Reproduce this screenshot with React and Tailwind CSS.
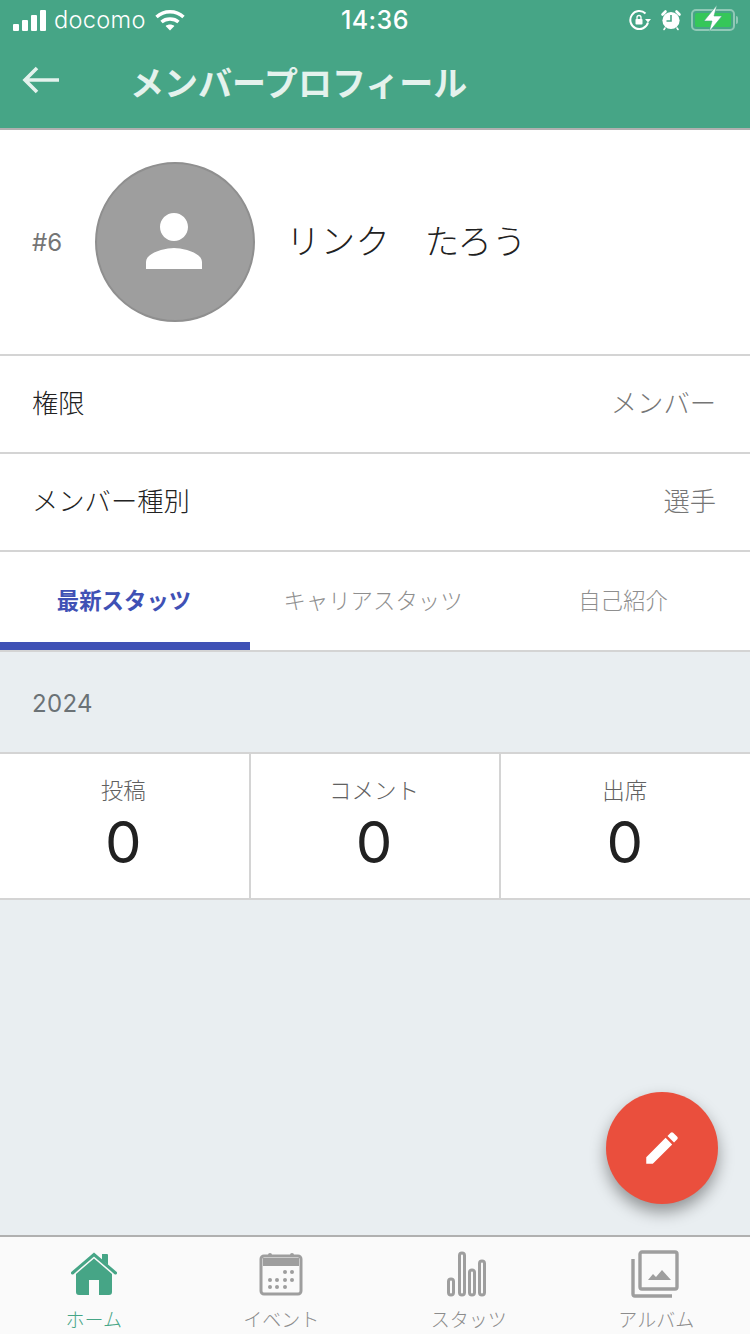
const FONT = "font-['Roboto','Noto_Sans_CJK_JP',sans-serif]";

function StatusBar() {
  return (
    <div className="h-10 flex items-center justify-between relative text-white">
      <div className="flex items-center pl-[13px]">
        <div className="flex items-end gap-[3px] h-[21px]">
          <div className="w-[6px] h-[7px] rounded-[1px] bg-white" />
          <div className="w-[6px] h-[11px] rounded-[1px] bg-white" />
          <div className="w-[6px] h-[16px] rounded-[1px] bg-white" />
          <div className="w-[6px] h-[21px] rounded-[1px] bg-white" />
        </div>
        <span className="ml-[8px] text-[23.6px] leading-[32px] tracking-[0.3px] font-['Inter',sans-serif] font-light">docomo</span>
        <svg className="ml-[9px]" width="30" height="22" viewBox="0 0 30 22" fill="none" stroke="#fff" strokeWidth="3.4">
          <path d="M1.5 8 C9 1 21 1 28.5 8" />
          <path d="M6.5 13 C11 9 19 9 23.5 13" />
          <path d="M15 21.5 L10.6 17 C13 15 17 15 19.4 17 Z" fill="#fff" stroke="none" />
        </svg>
      </div>
      <span className="absolute left-[341px] top-[4px] text-[25px] leading-[32px] tracking-[0.4px] font-['Inter',sans-serif] font-medium">14:36</span>
      <div className="flex items-center pr-[12px]">
        <svg width="22" height="22" viewBox="0 0 22 22" fill="none">
          <path d="M19 13.5 A9 9 0 1 1 16.5 4.5" stroke="#fff" strokeWidth="2" />
          <path d="M16 10 h6 l-3 3.5 z" fill="#fff" />
          <rect x="6.5" y="10" width="7" height="5.5" rx="0.8" fill="#fff" />
          <path d="M8 10 V8.5 a2 2 0 0 1 4 0 V10" stroke="#fff" strokeWidth="1.3" />
        </svg>
        <svg className="ml-[9px]" width="22" height="22" viewBox="0 0 22 22" fill="none">
          <circle cx="11" cy="11.5" r="8.6" fill="#fff" />
          <path d="M11 6 V12 H6.5" stroke="#46a586" strokeWidth="1.6" />
          <path d="M2.5 5.5 L5.5 2.5 M19.5 5.5 L16.5 2.5" stroke="#fff" strokeWidth="2.6" strokeLinecap="round" />
          <path d="M5 19 L4 20.5 M17 19 L18 20.5" stroke="#fff" strokeWidth="1.6" strokeLinecap="round" />
        </svg>
        <div className="ml-[9px] relative flex items-center">
          <div className="w-[44px] h-[22px] rounded-[5px] border-2 border-white/40 p-[2px]">
            <div className="w-full h-full rounded-[2px] bg-[#35c759]" />
          </div>
          <div className="ml-[1px] w-[2px] h-[8px] rounded-r-sm bg-white/40" />
          <svg className="absolute left-[11px] top-[-5px]" width="22" height="32" viewBox="0 0 22 32">
            <path d="M15 1 L2 17 H10 L7 28 L20 12 H12 Z" fill="#fff" stroke="#46a586" strokeWidth="0.6" />
          </svg>
        </div>
      </div>
    </div>
  );
}

function Row({ label, value }) {
  return (
    <div className="h-[98px] pt-[2px] bg-white border-b-2 border-[#d4d4d4] flex items-center justify-between pl-[32px] pr-[34px]">
      <span className="text-[26.3px] font-light text-[#222]">{label}</span>
      <span className="text-[26.3px] font-light text-[#757575]">{value}</span>
    </div>
  );
}

function Stat({ label, border }) {
  return (
    <div className={`flex-1 flex flex-col items-center pt-[22px] pr-[2px] ${border ? 'border-r-2 border-[#d4d4d4]' : ''}`}>
      <span className="mb-[2px] text-[22.5px] leading-[30px] font-light text-[#616161]">{label}</span>
      <span className="text-[58px] leading-[68px] text-[#212121] font-['Inter',sans-serif] font-normal">0</span>
    </div>
  );
}

function NavItem({ label, active, children }) {
  return (
    <div className="flex-1 flex flex-col items-center">
      <div className="h-[74px] flex items-center justify-center">{children}</div>
      <span className={`-mt-[3px] text-[19px] leading-[26px] font-light ${active ? 'text-[#46a586]' : 'text-[#8c8c8c]'}`}>{label}</span>
    </div>
  );
}

export default function App() {
  return (
    <div className={`${FONT} w-[750px] h-[1334px] relative overflow-hidden bg-[#e9eef1] flex flex-col`}>
      <header className="h-[130px] shrink-0 bg-[#46a586] border-b-2 border-[#b0b0b0]">
        <StatusBar />
        <div className="h-[88px] flex items-center text-[#e4f2ed]">
          <svg className="ml-[22px] mb-[8px]" width="38" height="28" viewBox="0 0 38 28" fill="none" stroke="currentColor" strokeWidth="3.6">
            <path d="M37 14 H3 M15 2 L3 14 L15 26" />
          </svg>
          <h1 className="ml-[70px] text-[34px] font-bold leading-none">メンバープロフィール</h1>
        </div>
      </header>

      <section className="h-[226px] shrink-0 bg-white border-b-2 border-[#d4d4d4] flex items-center pl-[32px]">
        <span className="w-[63px] text-[24px] mt-[2px] text-[#757575] font-['Inter',sans-serif] font-normal">#6</span>
        <div className="w-[160px] h-[160px] rounded-full bg-[#9e9e9e] border-2 border-[#8f8f8f] flex items-center justify-center">
          <svg width="84" height="84" viewBox="0 0 24 24" fill="#fff" className="-ml-[2px] -mt-[2px]">
            <path d="M12 12c2.21 0 4-1.79 4-4s-1.79-4-4-4-4 1.79-4 4 1.79 4 4 4zm0 2c-2.67 0-8 1.34-8 4v2h16v-2c0-2.66-5.33-4-8-4z" />
          </svg>
        </div>
        <span className="ml-[31px] mt-[2px] text-[34.4px] tracking-[0.3px] font-light text-[#212121]">リンク　たろう</span>
      </section>

      <Row label="権限" value="メンバー" />
      <Row label="メンバー種別" value="選手" />

      <div className="h-[100px] shrink-0 bg-white border-b-2 border-[#d4d4d4] flex text-[22.4px]">
        <div className="w-[250px] h-full pt-[10px] pr-[2px] flex items-center justify-center font-bold text-[#3f51b5] border-b-[8px] border-[#3f51b5]">最新スタッツ</div>
        <div className="w-[250px] h-full pt-[2px] pr-[4px] flex items-center justify-center font-light text-[#8f8f8f]">キャリアスタッツ</div>
        <div className="w-[250px] h-full pt-[2px] pr-[4px] flex items-center justify-center font-light text-[#8f8f8f]">自己紹介</div>
      </div>

      <div className="h-[102px] shrink-0 border-b-2 border-[#d4d4d4] flex items-center pl-[32px] pt-[3px] text-[24px] tracking-[0.3px] text-[#6b7276] font-['Inter',sans-serif]">2024</div>

      <div className="h-[146px] shrink-0 bg-white border-b-2 border-[#d4d4d4] flex">
        <Stat label="投稿" border />
        <Stat label="コメント" border />
        <Stat label="出席" />
      </div>

      <div className="flex-1" />

      <button className="absolute left-[606px] top-[1092px] w-[112px] h-[112px] rounded-full bg-[#ea4f3d] shadow-[0_8px_16px_rgba(0,0,0,0.38)] flex items-center justify-center">
        <svg width="42" height="42" viewBox="0 0 24 24" fill="#fff">
          <path d="M3 17.25V21h3.75L17.81 9.94l-3.75-3.75L3 17.25zM20.71 7.04a1 1 0 0 0 0-1.41l-2.34-2.34a1 1 0 0 0-1.41 0l-1.83 1.83 3.75 3.75 1.83-1.83z" />
        </svg>
      </button>

      <nav className="h-[99px] shrink-0 bg-[#fafafa] border-t-2 border-[#b0b0b0] flex">
        <NavItem label="ホーム" active>
          <svg width="46" height="44" viewBox="0 0 46 44">
            <path d="M1.5 21 L23 2.5 L44.5 21" fill="none" stroke="#46a586" strokeWidth="3" strokeLinecap="round" />
            <path d="M31 2 h5 a1 1 0 0 1 1 1 V13 L31 8 Z" fill="#46a586" />
            <path d="M23 6.5 L5 22 V40 a3 3 0 0 0 3 3 H18 V28 H28 V43 H38 a3 3 0 0 0 3 -3 V22 Z" fill="#46a586" />
          </svg>
        </NavItem>
        <NavItem label="イベント">
          <svg width="44" height="44" viewBox="0 0 44 44" fill="#9e9e9e">
            <circle cx="11" cy="3" r="2" />
            <circle cx="33" cy="3" r="2" />
            <rect x="2" y="4" width="40" height="38" rx="3" fill="none" stroke="#9e9e9e" strokeWidth="3" />
            <rect x="4" y="6" width="36" height="8" />
            {[[26, 20], [33, 20], [11, 28], [18, 28], [26, 28], [33, 28], [11, 35], [18, 35], [26, 35]].map(([x, y]) => (
              <circle key={`${x}-${y}`} cx={x} cy={y} r="2" />
            ))}
          </svg>
        </NavItem>
        <NavItem label="スタッツ">
          <svg className="-ml-[3px]" width="40" height="46" viewBox="0 0 40 46" fill="none" stroke="#9e9e9e" strokeWidth="3">
            <rect x="1.5" y="28" width="5" height="16" rx="2.5" />
            <rect x="12.5" y="2" width="5" height="42" rx="2.5" />
            <rect x="22.5" y="19" width="5" height="25" rx="2.5" />
            <rect x="32.5" y="10" width="5" height="34" rx="2.5" />
          </svg>
        </NavItem>
        <NavItem label="アルバム">
          <svg className="-ml-[2px]" width="48" height="48" viewBox="0 0 48 48" fill="none" stroke="#9e9e9e" strokeWidth="3.4">
            <rect x="9" y="2" width="37" height="37" rx="2" />
            <path d="M2 9 V44 a2 2 0 0 0 2 2 H41" />
            <path d="M17 30 L22 24 L25 27 L31 20 L40 30 Z" fill="#9e9e9e" stroke="none" />
          </svg>
        </NavItem>
      </nav>
    </div>
  );
}
